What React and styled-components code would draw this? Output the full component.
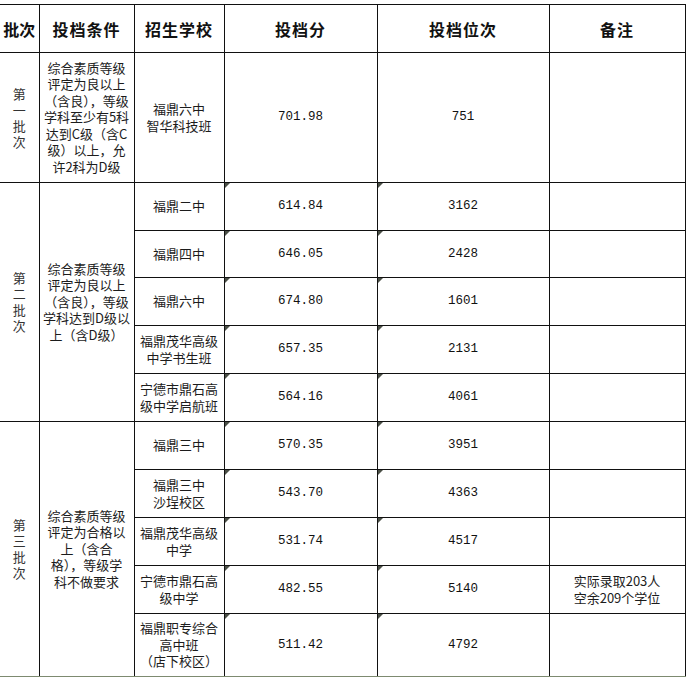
import React from "react";
import styled, { createGlobalStyle } from "styled-components";

const Global = createGlobalStyle`
  html, body { margin: 0; padding: 0; background: #fff; }
  body { font-family: "Noto Sans CJK SC", "Noto Sans", sans-serif; color: #1c1c1c; }
`;

const Page = styled.div`
  width: 689px;
  height: 677px;
  padding-top: 4px;
  box-sizing: border-box;
  background: #fff;
  overflow: hidden;
`;

const Table = styled.table`
  border-collapse: collapse;
  table-layout: fixed;
  width: 685px;
  border-top: 1px solid #111;
`;

const Col = styled.col`
  width: ${(p) => p.$w}px;
`;

const Row = styled.tr`
  height: ${(p) => p.$h}px;
`;

const Th = styled.th`
  border: 1px solid #111;
  border-top: none;
  ${(p) => (p.$first ? "border-left: none;" : "")}
  font-family: "Noto Sans CJK SC", sans-serif;
  font-weight: 700;
  font-size: 16px;
  letter-spacing: ${(p) => (p.$spaced ? "1px" : "0")};
  color: #111;
  text-align: center;
  vertical-align: middle;
  padding: 0;
  white-space: nowrap;
`;

const Td = styled.td`
  position: relative;
  border: 1px solid #111;
  ${(p) => (p.$first ? "border-left: none;" : "")}
  ${(p) => (p.$last ? "border-bottom: 2px solid #7d8a70;" : "")}
  font-size: 13px;
  line-height: 16.5px;
  text-align: center;
  vertical-align: middle;
  padding: 0;
  color: #1c1c1c;
  white-space: nowrap;
`;

const BatchText = styled.div`
  width: 14px;
  margin: 0 auto;
  font-size: 13px;
  line-height: 16px;
  color: #333;
  white-space: normal;
  word-break: break-all;
`;

const NumCell = styled(Td)`
  font-family: "Liberation Mono", "DejaVu Sans Mono", monospace;
  font-size: 12.5px;
  color: #111;
  &::before {
    content: "";
    position: absolute;
    left: 0;
    top: 0;
    border-top: 5px solid ${(p) => (p.$mark ? "#4a4f46" : "transparent")};
    border-right: 5px solid transparent;
  }
`;

const Lines = ({ lines }) =>
  lines.map((l, i) => (
    <React.Fragment key={i}>
      {l}
      {i < lines.length - 1 && <br />}
    </React.Fragment>
  ));

const groups = [
  {
    batch: "第一批次",
    cond: ["综合素质等级", "评定为良以上", "（含良），等级", "学科至少有5科", "达到C级（含C", "级）以上，允", "许2科为D级"],
    rows: [{ school: ["福鼎六中", "智华科技班"], score: "701.98", rank: "751", h: 130 }],
  },
  {
    batch: "第二批次",
    cond: ["综合素质等级", "评定为良以上", "（含良），等级", "学科达到D级以", "上（含D级）"],
    rows: [
      { school: ["福鼎二中"], score: "614.84", rank: "3162", h: 48 },
      { school: ["福鼎四中"], score: "646.05", rank: "2428", h: 47 },
      { school: ["福鼎六中"], score: "674.80", rank: "1601", h: 48 },
      { school: ["福鼎茂华高级", "中学书生班"], score: "657.35", rank: "2131", h: 48 },
      { school: ["宁德市鼎石高", "级中学启航班"], score: "564.16", rank: "4061", h: 48 },
    ],
  },
  {
    batch: "第三批次",
    cond: ["综合素质等级", "评定为合格以", "上（含合", "格），等级学", "科不做要求"],
    rows: [
      { school: ["福鼎三中"], score: "570.35", rank: "3951", h: 48 },
      { school: ["福鼎三中", "沙埕校区"], score: "543.70", rank: "4363", h: 48 },
      { school: ["福鼎茂华高级", "中学"], score: "531.74", rank: "4517", h: 48 },
      { school: ["宁德市鼎石高", "级中学"], score: "482.55", rank: "5140", h: 48, note: ["实际录取203人", "空余209个学位"] },
      { school: ["福鼎职专综合", "高中班", "（店下校区）"], score: "511.42", rank: "4792", h: 63 },
    ],
  },
];

export default function App() {
  return (
    <>
      <Global />
      <Page>
        <Table>
          <colgroup>
            <Col $w={39} />
            <Col $w={95} />
            <Col $w={90} />
            <Col $w={153} />
            <Col $w={172} />
            <Col $w={136} />
          </colgroup>
          <thead>
            <Row $h={48}>
              <Th $first>批次</Th>
              <Th $spaced>投档条件</Th>
              <Th $spaced>招生学校</Th>
              <Th $spaced>投档分</Th>
              <Th $spaced>投档位次</Th>
              <Th $spaced>备注</Th>
            </Row>
          </thead>
          <tbody>
            {groups.map((g, gi) =>
              g.rows.map((r, ri) => {
                const last = gi === groups.length - 1 && ri === g.rows.length - 1;
                const lastGroup = gi === groups.length - 1;
                return (
                  <Row key={`${gi}-${ri}`} $h={r.h}>
                    {ri === 0 && (
                      <Td $first $last={lastGroup} rowSpan={g.rows.length}>
                        <BatchText>{g.batch}</BatchText>
                      </Td>
                    )}
                    {ri === 0 && (
                      <Td $last={lastGroup} rowSpan={g.rows.length}>
                        <Lines lines={g.cond} />
                      </Td>
                    )}
                    <Td $last={last}>
                      <Lines lines={r.school} />
                    </Td>
                    <NumCell $last={last} $mark={gi > 0}>{r.score}</NumCell>
                    <NumCell $last={last} $mark={gi > 0}>{r.rank}</NumCell>
                    <Td $last={last}>{r.note ? <Lines lines={r.note} /> : null}</Td>
                  </Row>
                );
              })
            )}
          </tbody>
        </Table>
      </Page>
    </>
  );
}
